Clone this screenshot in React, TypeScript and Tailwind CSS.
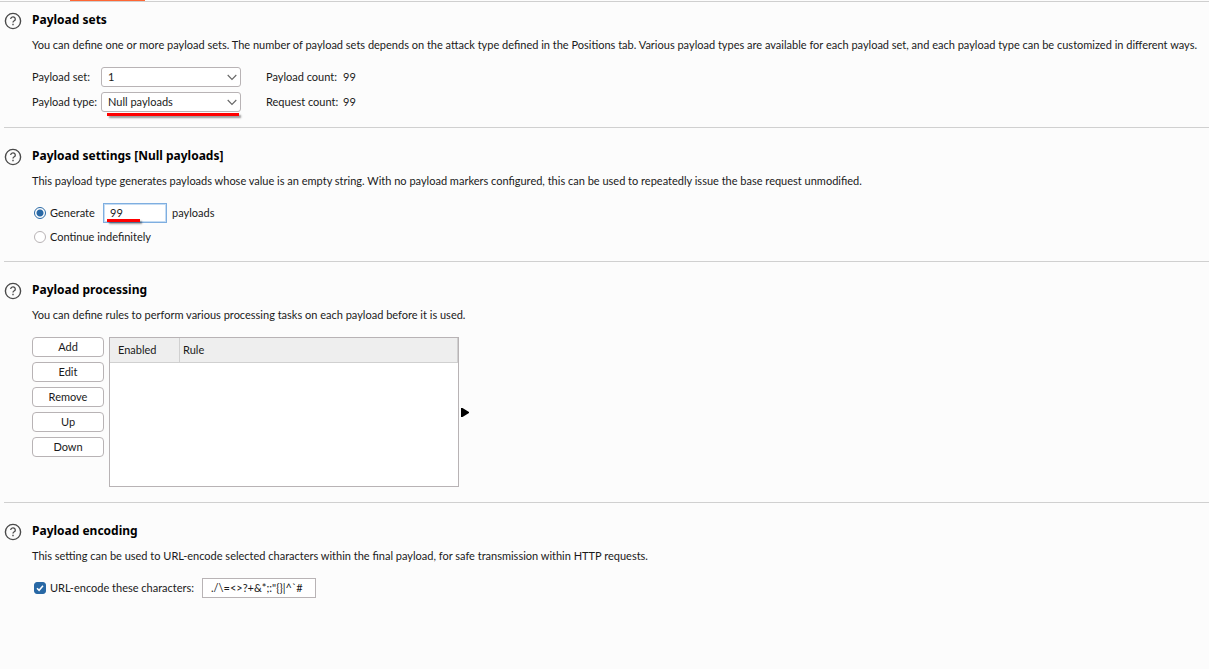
import * as React from "react";

const HelpIcon: React.FunctionComponent = () => (
  <svg width="18" height="18" viewBox="0 0 18 18" fill="none" stroke="#4a4a4a">
    <circle cx="9" cy="9" r="7.6" strokeWidth="1.4" />
    <path
      d="M6.7 7.1a2.3 2.1 0 1 1 3.6 1.7c-.8.5-1.3.8-1.3 1.7"
      strokeWidth="1.3"
    />
    <path d="M9 11.8v1.4" strokeWidth="1.4" />
  </svg>
);

interface SectionProps {
  title: string;
  description: string;
  className: string;
  children: React.ReactNode;
}

const Section: React.FunctionComponent<SectionProps> = ({
  title,
  description,
  className,
  children,
}) => (
  <section className={`ml-1 flex border-[#d0d0d0] ${className}`}>
    <button aria-label={`Help: ${title}`} className="w-7 h-5 shrink-0 pt-0.5">
      <HelpIcon />
    </button>
    <div className="min-w-0 flex-1">
      <h2 className="font-['Noto_Sans',sans-serif] text-xs leading-5 font-bold text-black">
        {title}
      </h2>
      <p className="mt-[5px] mb-3 leading-5">{description}</p>
      {children}
    </div>
  </section>
);

interface SelectFieldProps {
  id: string;
  label: string;
  options: string[];
  marked?: boolean;
}

const SelectField: React.FunctionComponent<SelectFieldProps> = ({
  id,
  label,
  options,
  marked,
}) => (
  <>
    <label htmlFor={id} className="whitespace-nowrap">
      {label}
    </label>
    <div className="relative">
      <select
        id={id}
        className="block w-full h-5 appearance-none rounded-[3px] border border-[#b8b3b5] bg-white pl-1.5 pr-5 leading-4"
      >
        {options.map((option) => (
          <option key={option}>{option}</option>
        ))}
      </select>
      <svg
        width="12"
        height="8"
        viewBox="0 0 12 8"
        className="pointer-events-none absolute right-[3px] top-1.5"
      >
        <path
          d="M1.7 2L6 6.4 10.3 2"
          fill="none"
          stroke="#666666"
          strokeWidth="1.1"
        />
      </svg>
      {marked && (
        <span className="absolute left-1.5 right-0.5 top-[21px] h-[3px] bg-[#ff0000] shadow-[2px_2px_2px_rgba(0,0,0,0.4)]" />
      )}
    </div>
  </>
);

const radioClass =
  "size-3 shrink-0 appearance-none rounded-full border border-[#b8b3b5] bg-white checked:border-[#2868a5] checked:bg-[radial-gradient(circle,#2868a5_3px,#ffffff_4px)]";

const App: React.FunctionComponent = () => {
  const actions = ["Add", "Edit", "Remove", "Up", "Down"];

  return (
    <main className="min-h-screen bg-[#fcfcfc] font-[Lato,'Noto_Sans',sans-serif] text-[11px] leading-5 text-[#1a1a1a]">
      <div className="flex h-0.5 border-b border-[#cfcfcf]">
        <div className="ml-[70px] h-px w-[75px] bg-[#ff6633]" />
      </div>

      <Section
        title="Payload sets"
        description="You can define one or more payload sets. The number of payload sets depends on the attack type defined in the Positions tab. Various payload types are available for each payload set, and each payload type can be customized in different ways."
        className="border-b pt-2 pb-[15px]"
      >
        <div className="flex gap-[25px]">
          <div className="grid grid-cols-[69px_140px] gap-y-[5px]">
            <SelectField
              id="payload-set"
              label="Payload set:"
              options={["1"]}
            />
            <SelectField
              id="payload-type"
              label="Payload type:"
              options={["Null payloads"]}
              marked
            />
          </div>
          <dl className="grid grid-cols-[77px_auto] gap-y-[5px] whitespace-nowrap">
            <dt>Payload count:</dt>
            <dd>99</dd>
            <dt>Request count:</dt>
            <dd>99</dd>
          </dl>
        </div>
      </Section>

      <Section
        title="Payload settings [Null payloads]"
        description="This payload type generates payloads whose value is an empty string. With no payload markers configured, this can be used to repeatedly issue the base request unmodified."
        className="border-b pt-[18px] pb-[14px]"
      >
        <div className="flex flex-col gap-1 pl-0.5">
          <div className="flex items-center">
            <input
              type="radio"
              name="mode"
              id="generate"
              defaultChecked
              className={radioClass}
            />
            <label htmlFor="generate" className="w-[57px] pl-1">
              Generate
            </label>
            <div className="relative">
              <input
                type="text"
                id="count"
                defaultValue="99"
                className="block h-5 w-16 border border-[#7eaee0] bg-white px-1.5 outline-none ring-1 ring-inset ring-[#c5dcf3]"
              />
              <span className="absolute left-1 bottom-px h-[3px] w-[33px] bg-[#ff0000] shadow-[2px_2px_2px_rgba(0,0,0,0.4)]" />
            </div>
            <label htmlFor="count" className="pl-[5px]">
              payloads
            </label>
          </div>
          <div className="flex items-center">
            <input
              type="radio"
              name="mode"
              id="continue"
              className={radioClass}
            />
            <label htmlFor="continue" className="pl-1">
              Continue indefinitely
            </label>
          </div>
        </div>
      </Section>

      <Section
        title="Payload processing"
        description="You can define rules to perform various processing tasks on each payload before it is used."
        className="border-b pt-[18px] pb-[15px]"
      >
        <div className="flex">
          <div className="flex w-[72px] flex-col gap-[5px]">
            {actions.map((action) => (
              <button
                key={action}
                className="h-5 rounded-[4px] border border-[#b8b3b5] bg-white leading-4"
              >
                {action}
              </button>
            ))}
          </div>
          <div className="ml-[5px] h-[150px] w-[350px] border border-[#b8b3b5] bg-white">
            <table className="w-full border-separate border-spacing-0 text-left">
              <thead className="bg-[#eeeeee]">
                <tr>
                  <th className="h-[25px] w-[70px] border-r border-b border-[#d0d0d0] p-0 pl-2 font-normal">
                    Enabled
                  </th>
                  <th className="border-r border-b border-[#d0d0d0] p-0 pl-[3px] font-normal">
                    Rule
                  </th>
                </tr>
              </thead>
              <tbody />
            </table>
          </div>
          <button aria-label="Expand" className="ml-0.5 self-center">
            <svg width="8" height="9" viewBox="0 0 8 9" className="block">
              <path d="M0 0h1.5L8 4v1L1.5 9H0z" fill="#000000" />
            </svg>
          </button>
        </div>
      </Section>

      <Section
        title="Payload encoding"
        description="This setting can be used to URL-encode selected characters within the final payload, for safe transmission within HTTP requests."
        className="pt-[18px]"
      >
        <div className="flex items-center pl-0.5">
          <div className="relative size-3">
            <input
              type="checkbox"
              id="encode"
              defaultChecked
              className="peer block size-3 appearance-none rounded-[3px] border border-[#b8b3b5] bg-white checked:border-[#2868a5] checked:bg-[#2868a5]"
            />
            <svg
              viewBox="0 0 12 12"
              className="pointer-events-none absolute inset-0 hidden peer-checked:block"
            >
              <path
                d="M3 6.2l2.1 2.1L9 3.8"
                fill="none"
                stroke="#ffffff"
                strokeWidth="1.5"
              />
            </svg>
          </div>
          <label htmlFor="encode" className="w-[156px] whitespace-nowrap pl-1">
            URL-encode these characters:
          </label>
          <input
            type="text"
            aria-label="Characters to encode"
            defaultValue={'./\\=<>?+&*;:"{}|^`#'}
            className="h-5 w-[114px] border border-[#b8b3b5] bg-white px-2 outline-none"
          />
        </div>
      </Section>
    </main>
  );
};

export default App;
